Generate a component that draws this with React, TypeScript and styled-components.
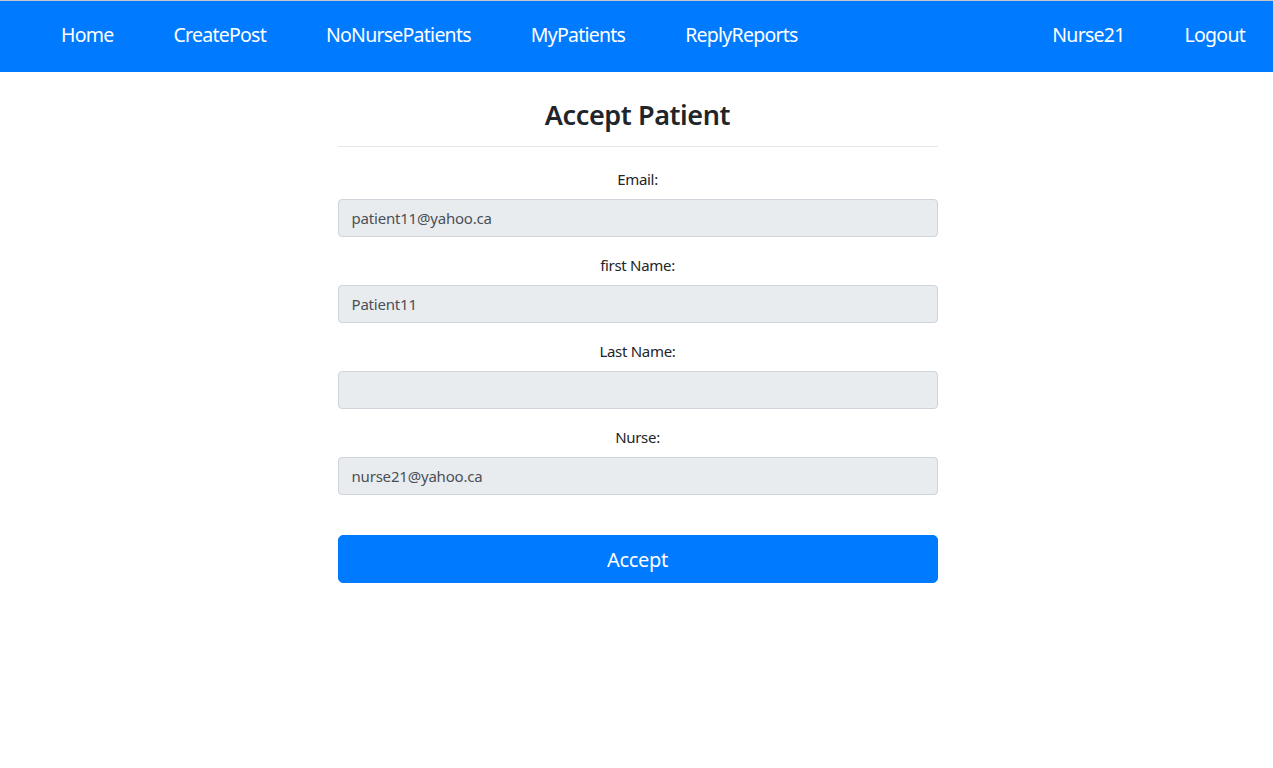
import React from "react";
import styled, { createGlobalStyle } from "styled-components";

const Global = createGlobalStyle`
  html, body { margin: 0; padding: 0; background: #fff; }
  body {
    font-family: "Noto Sans", "Open Sans", sans-serif;
    font-size: 16px;
    line-height: 1.5;
    color: #212529;
    border-top: 1px solid #c8c8c8;
  }
  * { box-sizing: border-box; }
`;

const NavBar = styled.nav`
  background: #007bff;
  height: 71px;
  display: flex;
  align-items: center;
  justify-content: space-between;
  padding: 0 28px 3px 61px;
`;

const NavGroup = styled.ul`
  display: flex;
  list-style: none;
  margin: 0;
  padding: 0;
  gap: 60px;
`;

const NavLink = styled.a`
  color: #fff;
  text-decoration: none;
  font-size: 19.5px;
  line-height: 30px;
  letter-spacing: -0.75px;
`;

const Main = styled.main`
  width: 600px;
  margin: 0 auto;
  padding-top: 24px;
  transform: translateX(1px);
`;

const Title = styled.h3`
  margin: 0 0 12px;
  text-align: center;
  font-size: 27px;
  font-weight: 600;
  line-height: 38px;
  letter-spacing: -0.4px;
  color: #212529;
`;

const Rule = styled.hr`
  margin: 0 0 20px;
  border: 0;
  border-top: 1px solid #e5e7ea;
`;

const Group = styled.div`
  margin-bottom: 16px;
  display: flex;
  flex-direction: column;
`;

const Label = styled.label`
  text-align: center;
  margin-bottom: 8px;
  font-size: 15px;
  line-height: 24px;
  letter-spacing: -0.3px;
`;

const Field = styled.input`
  height: 38px;
  padding: 6px 13px;
  font-family: inherit;
  font-size: 15px;
  letter-spacing: -0.2px;
  color: #495057;
  background: #e9ecef;
  border: 1px solid #ced4da;
  border-radius: 4px;
  outline: none;
`;

const Submit = styled.button`
  margin-top: 24px;
  width: 100%;
  height: 48px;
  background: #007bff;
  border: 1px solid #007bff;
  border-radius: 5px;
  color: #fff;
  font-family: inherit;
  font-size: 20px;
  letter-spacing: -0.3px;
  cursor: pointer;
`;

const fields = [
  { label: "Email:", value: "patient11@yahoo.ca" },
  { label: "first Name:", value: "Patient11" },
  { label: "Last Name:", value: "" },
  { label: "Nurse:", value: "nurse21@yahoo.ca" },
];

export default function App() {
  return (
    <>
      <Global />
      <NavBar>
        <NavGroup>
          {["Home", "CreatePost", "NoNursePatients", "MyPatients", "ReplyReports"].map((t) => (
            <li key={t}>
              <NavLink href="#">{t}</NavLink>
            </li>
          ))}
        </NavGroup>
        <NavGroup>
          <li>
            <NavLink href="#">Nurse21</NavLink>
          </li>
          <li>
            <NavLink href="#">Logout</NavLink>
          </li>
        </NavGroup>
      </NavBar>
      <Main>
        <Title>Accept Patient</Title>
        <Rule />
        {fields.map((f) => (
          <Group key={f.label}>
            <Label>{f.label}</Label>
            <Field readOnly value={f.value} />
          </Group>
        ))}
        <Submit type="button">Accept</Submit>
      </Main>
    </>
  );
}
